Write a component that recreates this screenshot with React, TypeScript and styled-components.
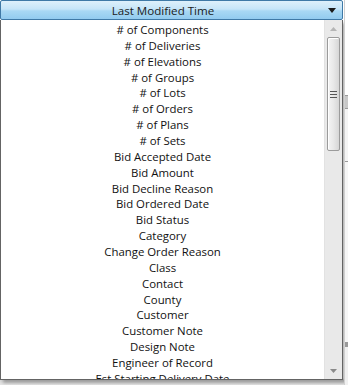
import React from "react";
import styled, { createGlobalStyle } from "styled-components";

const Global = createGlobalStyle`
  html, body { margin: 0; padding: 0; }
  body {
    width: 348px; height: 385px; overflow: hidden;
    background: #ffffff;
    font-family: "Open Sans", "Noto Sans", sans-serif;
  }
`;

const Page = styled.div`
  display: flex;
  width: 348px;
  height: 385px;
  overflow: hidden;
  background: linear-gradient(to bottom, #ffffff 0, #ffffff 378px, #d8d8d8 380px, #e6e6e6 385px);
`;

const Combo = styled.div`
  display: flex;
  flex-direction: column;
  width: 343px;
  flex: none;
`;

const Header = styled.div`
  position: relative;
  display: flex;
  align-items: center;
  justify-content: center;
  height: 18px;
  padding-right: 17px;
  border: 1px solid #3f79a6;
  border-radius: 2px;
  background: linear-gradient(to bottom, #def0fb 0%, #c6e5f8 45%, #a9d8f4 55%, #92cbef 100%);
  font-size: 11.6px;
  color: #1b1b1b;
`;

const Arrow = styled.svg`
  position: absolute;
  right: 6px;
  top: 7px;
`;

const Popup = styled.div`
  display: flex;
  height: 359px;
  border: 1px solid #646464;
  border-top: none;
  background: #ffffff;
  box-shadow: 3px 3px 3px rgba(0, 0, 0, 0.28);
`;

const List = styled.div`
  flex: 1;
  overflow: hidden;
  padding-top: 2px;
`;

const Item = styled.div`
  height: 15.86px;
  line-height: 15.86px;
  text-align: center;
  white-space: nowrap;
  font-size: 11.4px;
  color: #111;
`;

const Scrollbar = styled.div`
  width: 17px;
  flex: none;
  display: flex;
  flex-direction: column;
  align-items: center;
  background: #e9e9e9;
  border-left: 1px solid #e2e2e2;
`;

const ScrollBtn = styled.div`
  height: 17px;
  width: 17px;
  display: flex;
  align-items: center;
  justify-content: center;
`;

const Track = styled.div`
  flex: 1;
  width: 100%;
  display: flex;
  flex-direction: column;
  align-items: center;
`;

const Thumb = styled.div`
  width: 13px;
  height: 114px;
  box-sizing: border-box;
  border: 1px solid #9b9b9b;
  border-radius: 2px;
  background: linear-gradient(to right, #f4f4f4 0%, #e8e8e8 50%, #d6d6d6 100%);
  display: flex;
  align-items: center;
  justify-content: center;
  box-shadow: inset 1px 1px 0 #ffffff;
`;

const RightStrip = styled.div`
  flex: 1;
  display: flex;
  flex-direction: column;
  border-left: 1px solid #d0d0d0;
  margin-left: 1px;
`;

const StripBlock = styled.div<{ $h: number; $bg: string; $line?: string }>`
  height: ${(p) => p.$h}px;
  background: ${(p) => p.$bg};
  border-bottom: ${(p) => (p.$line ? `1px solid ${p.$line}` : "none")};
  flex: none;
`;

const items = [
  "# of Components",
  "# of Deliveries",
  "# of Elevations",
  "# of Groups",
  "# of Lots",
  "# of Orders",
  "# of Plans",
  "# of Sets",
  "Bid Accepted Date",
  "Bid Amount",
  "Bid Decline Reason",
  "Bid Ordered Date",
  "Bid Status",
  "Category",
  "Change Order Reason",
  "Class",
  "Contact",
  "County",
  "Customer",
  "Customer Note",
  "Design Note",
  "Engineer of Record",
  "Est Starting Delivery Date",
];

export default function App() {
  return (
    <>
      <Global />
      <Page>
        <Combo>
          <Header>
            Last Modified Time
            <Arrow width="8" height="5" viewBox="0 0 8 5">
              <path d="M0 0 L8 0 L4 5 Z" fill="#1a1a1a" />
            </Arrow>
          </Header>
          <Popup>
            <List>
              {items.map((t) => (
                <Item key={t}>{t}</Item>
              ))}
            </List>
            <Scrollbar>
              <ScrollBtn>
                <svg width="7" height="4" viewBox="0 0 7 4">
                  <path d="M0 4 L7 4 L3.5 0 Z" fill="#b5b5b5" />
                </svg>
              </ScrollBtn>
              <Track>
                <Thumb>
                  <svg width="7" height="7" viewBox="0 0 7 7">
                    <rect x="0" y="0" width="7" height="1" fill="#555" />
                    <rect x="0" y="3" width="7" height="1" fill="#555" />
                    <rect x="0" y="6" width="7" height="1" fill="#555" />
                  </svg>
                </Thumb>
              </Track>
              <ScrollBtn>
                <svg width="7" height="4" viewBox="0 0 7 4">
                  <path d="M0 0 L7 0 L3.5 4 Z" fill="#8a8a8a" />
                </svg>
              </ScrollBtn>
            </Scrollbar>
          </Popup>
        </Combo>
        <RightStrip>
          <StripBlock $h={95} $bg="#ffffff" $line="#9a9a9a" />
          <StripBlock $h={12} $bg="#c8c8c8" $line="#9a9a9a" />
          <StripBlock $h={52} $bg="#f4f4f4" $line="#9a9a9a" />
          <StripBlock $h={180} $bg="#f6f6f6" />
          <StripBlock $h={5} $bg="#9a9a9a" />
          <StripBlock $h={40} $bg="#f0f0f0" />
        </RightStrip>
      </Page>
    </>
  );
}
